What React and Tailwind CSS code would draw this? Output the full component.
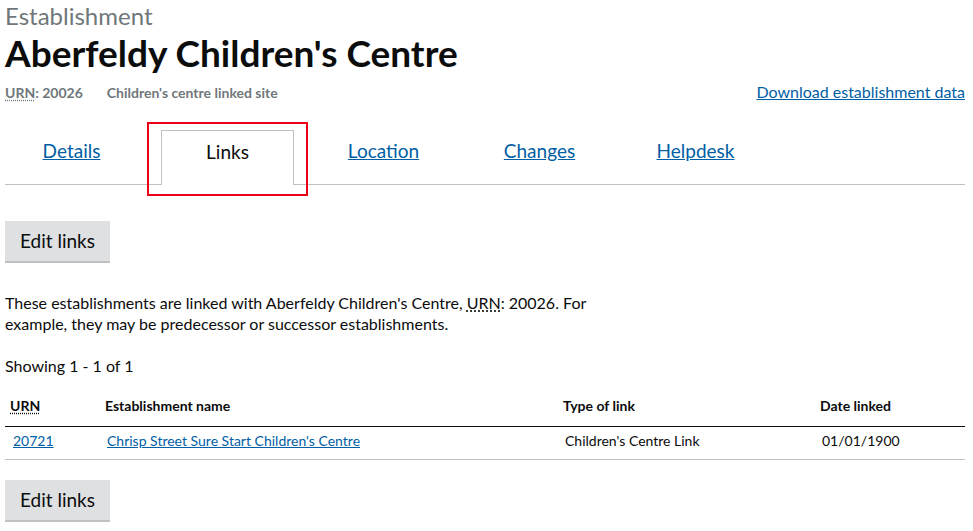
const tabs = ["Details", "Links", "Location", "Changes", "Helpdesk"];

const EditButton = () => (
  <button className="bg-[#dee0e2] text-[#0b0c0c] text-[19px] leading-[25px] h-[40px] px-[15px] pt-[6px] pb-[8px] shadow-[0_2px_0_#bfc1c3] mb-[2px]">
    Edit links
  </button>
);

const App = () => {
  return (
    <div className="px-[5px] pr-[8px] bg-white text-[#0b0c0c] font-['Lato',sans-serif] w-[973px] h-[531px] overflow-hidden">
      {/* Cabecera */}
      <p className="text-[24px] leading-[32px] text-[#6f777b]">Establishment</p>
      <h1 className="text-[37px] leading-[44px] font-bold -mt-[1px]">Aberfeldy Children's Centre</h1>

      <div className="flex items-center justify-between mt-[6px] h-[22px]">
        <div className="flex items-center text-[14px] font-bold text-[#6f777b]">
          <span>
            <span className="underline decoration-dotted underline-offset-2">URN</span>: 20026
          </span>
          <span className="ml-[24px]">Children's centre linked site</span>
        </div>
        <a href="#" className="text-[16px] text-[#005ea5] underline">Download establishment data</a>
      </div>

      {/* Pestañas */}
      <ul className="flex gap-[23px] border-b border-[#bfc1c3] mt-[28px] h-[54px] items-end">
        {tabs.map((t) => (
          <li key={t} className="w-[133px] shrink-0 relative">
            {t === "Links" ? (
              <>
                <div className="h-[55px] border border-b-0 border-[#bfc1c3] bg-white -mb-px text-center pt-[8px] text-[19px] leading-[25px]">
                  {t}
                </div>
                <div className="absolute -left-[14px] -right-[14px] -top-[8px] -bottom-[12px] border-2 border-[#ee0018]" />
              </>
            ) : (
              <div className="h-[54px] text-center pt-[8px] text-[19px] leading-[25px]">
                <a href="#" className="text-[#005ea5] underline">{t}</a>
              </div>
            )}
          </li>
        ))}
      </ul>

      <div className="mt-[36px]">
        <EditButton />
      </div>

      <p className="text-[16px] leading-[21px] max-w-[610px] mt-[29px]">
        These establishments are linked with Aberfeldy Children's Centre,{" "}
        <span className="underline decoration-dotted underline-offset-2">URN</span>: 20026. For example, they may be predecessor or successor establishments.
      </p>

      <p className="text-[16px] leading-[21px] mt-[21px]">Showing 1 - 1 of 1</p>

      {/* Tabla */}
      <table className="w-[960px] mt-[19px] text-[14px] border-collapse">
        <thead>
          <tr className="border-b border-[#0b0c0c]">
            <th className="text-left font-bold pl-[5px] pb-[10px] w-[100px]">
              <span className="underline decoration-dotted underline-offset-2">URN</span>
            </th>
            <th className="text-left font-bold pb-[10px] w-[458px]">Establishment name</th>
            <th className="text-left font-bold pb-[10px] w-[257px]">Type of link</th>
            <th className="text-left font-bold pb-[10px]">Date linked</th>
          </tr>
        </thead>
        <tbody>
          <tr className="border-b border-[#bfc1c3] leading-[20px]">
            <td className="pl-[8px] pt-[4px] pb-[8px]">
              <a href="#" className="text-[#005ea5] underline">20721</a>
            </td>
            <td className="pt-[4px] pb-[8px] pl-[2px]">
              <a href="#" className="text-[#005ea5] underline">Chrisp Street Sure Start Children's Centre</a>
            </td>
            <td className="pt-[4px] pb-[8px] pl-[2px]">Children's Centre Link</td>
            <td className="pt-[4px] pb-[8px] pl-[2px]">01/01/1900</td>
          </tr>
        </tbody>
      </table>

      <div className="mt-[20px]">
        <EditButton />
      </div>
    </div>
  );
};

export default App;
